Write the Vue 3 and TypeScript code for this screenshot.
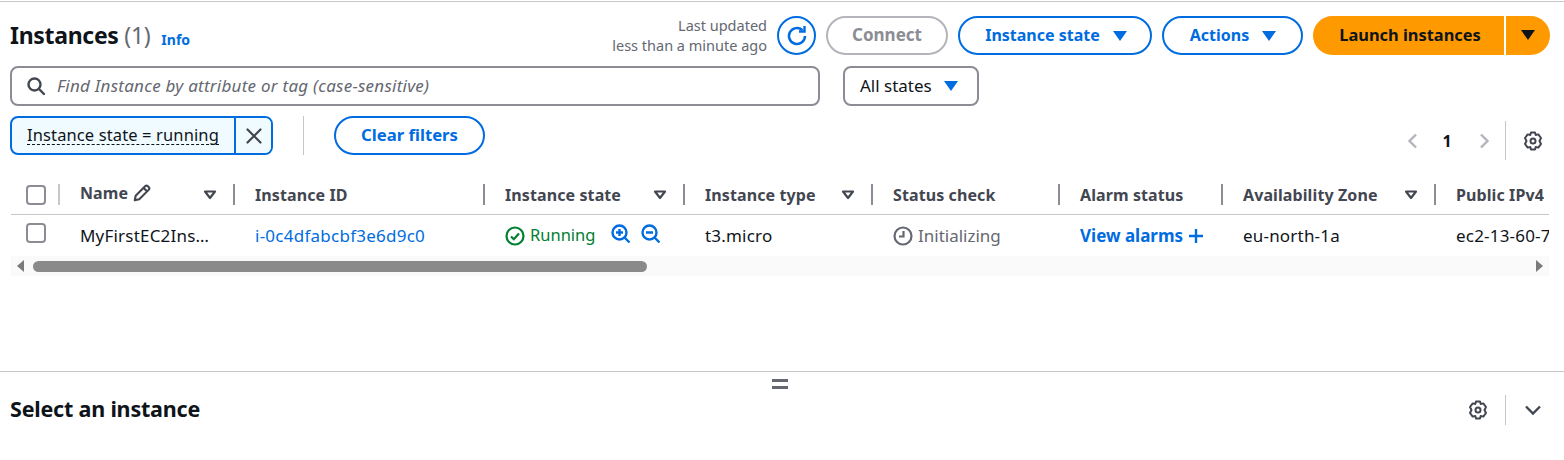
<script setup lang="ts">
interface Column {
  label: string
  width: number
  filter: boolean
}

const columns: Column[] = [
  { label: 'Instance ID', width: 250, filter: false },
  { label: 'Instance state', width: 200, filter: true },
  { label: 'Instance type', width: 188, filter: true },
  { label: 'Status check', width: 187, filter: false },
  { label: 'Alarm status', width: 163, filter: false },
  { label: 'Availability Zone', width: 213, filter: true },
  { label: 'Public IPv4', width: 115, filter: false },
]

const gearPath =
  'M8 1.500h4l.7 2.500 2.600-.6 2.700 3.600L16.500 10l1.500 3-2.700 3.600-2.600-.6-.7 2.500H8L7.300 16l-2.600.6L2 13l1.500-3L2 7l2.700-3.600 2.600.6z'
</script>

<template>
  <div class="page">
    <section class="panel">
      <header class="head">
        <div class="title">
          <h1>Instances <span class="count">(1)</span></h1>
          <a class="info">Info</a>
        </div>
        <div class="actions">
          <div class="updated">Last updated<br />less than a minute ago</div>
          <button class="refresh" aria-label="Refresh">
            <svg width="24" height="24" viewBox="0 0 24 24" fill="none" stroke="#006ce0" stroke-width="2.500">
              <path d="M20 12a8 8 0 1 1-2.600-5.900" />
              <path d="M19.500 2v5.500H14" stroke-width="2.400" />
            </svg>
          </button>
          <button class="btn disabled connect">Connect</button>
          <button class="btn state">Instance state <i class="caret"></i></button>
          <button class="btn act">Actions <i class="caret"></i></button>
          <div class="launch">
            <button class="launch-main">Launch instances</button>
            <button class="launch-drop" aria-label="More"><i class="caret dark"></i></button>
          </div>
        </div>
      </header>

      <div class="search-row">
        <div class="search">
          <svg width="20" height="20" viewBox="0 0 20 20" fill="none" stroke="#424650" stroke-width="2.400">
            <circle cx="8.500" cy="8.500" r="6" />
            <path d="M13 13l5 5" stroke-linecap="round" />
          </svg>
          <span class="placeholder">Find Instance by attribute or tag (case-sensitive)</span>
        </div>
        <div class="states">All states <i class="caret"></i></div>
      </div>

      <div class="filter-row">
        <div class="chip">
          <span class="chip-text"><span>Instance state = running</span></span>
          <button class="chip-x" aria-label="Remove">
            <svg width="18" height="18" viewBox="0 0 18 18" stroke="#424650" stroke-width="2.200" stroke-linecap="round">
              <path d="M2.500 2.500l13 13M15.500 2.500l-13 13" />
            </svg>
          </button>
        </div>
        <div class="vline"></div>
        <button class="btn clear">Clear filters</button>
        <div class="pager">
          <svg width="16" height="16" viewBox="0 0 16 16" fill="none" stroke="#b4b4bb" stroke-width="2.400">
            <path d="M11 1.500L4.500 8l6.500 6.500" />
          </svg>
          <b>1</b>
          <svg class="next" width="16" height="16" viewBox="0 0 16 16" fill="none" stroke="#b4b4bb" stroke-width="2.400">
            <path d="M5 1.500L11.500 8 5 14.500" />
          </svg>
          <div class="vline short"></div>
          <svg class="gear" width="20" height="20" viewBox="0 0 20 20" fill="none" stroke="#424650" stroke-width="2">
            <circle cx="10" cy="10" r="2.500" />
            <path :d="gearPath" stroke-linejoin="round" />
          </svg>
        </div>
      </div>

      <div class="table">
        <div class="thead">
          <div class="cell-check">
            <span class="box"></span>
            <span class="sep light"></span>
          </div>
          <div class="th name-col">
            <span class="name-label">Name
              <svg width="20" height="20" viewBox="0 0 18 18" fill="none" stroke="#424650" stroke-width="1.900" stroke-linejoin="round">
                <path d="M2.500 15.500l.8-4L11.800 3a1.800 1.800 0 0 1 2.500 0l.7.700a1.800 1.800 0 0 1 0 2.500L6.500 14.700z" />
                <path d="M10.500 4.500l3 3" />
              </svg>
            </span>
            <svg class="tri" width="14" height="10" viewBox="0 0 14 10" fill="none" stroke="#424650" stroke-width="2.200">
              <path d="M2 1.500h10L7 8z" stroke-linejoin="round" />
            </svg>
            <span class="sep"></span>
          </div>
          <div v-for="(col, i) in columns" :key="col.label" class="th" :style="{ width: col.width + 'px' }">
            <span>{{ col.label }}</span>
            <svg v-if="col.filter" class="tri" width="14" height="10" viewBox="0 0 14 10" fill="none" stroke="#424650" stroke-width="2.200">
              <path d="M2 1.500h10L7 8z" stroke-linejoin="round" />
            </svg>
            <span v-if="i < columns.length - 1" class="sep"></span>
          </div>
        </div>

        <div class="tbody">
          <div class="cell-check body-check">
            <span class="box"></span>
          </div>
          <div class="td name-col">MyFirstEC2Ins…</div>
          <div class="td" :style="{ width: columns[0].width + 'px' }"><a class="link">i-0c4dfabcbf3e6d9c0</a></div>
          <div class="td" :style="{ width: columns[1].width + 'px' }">
            <svg width="20" height="20" viewBox="0 0 20 20" fill="none" stroke="#00802f" stroke-width="2.200">
              <circle cx="10" cy="10" r="8.500" />
              <path d="M6 10.500l2.800 2.700L14 7.500" />
            </svg>
            <span class="running">Running</span>
            <svg class="zoom-a" width="20" height="20" viewBox="0 0 20 20" fill="none" stroke="#006ce0" stroke-width="2.400">
              <circle cx="8.500" cy="8.500" r="7" />
              <path d="M13.500 13.500l5 5M5 8.500h7M8.500 5v7" />
            </svg>
            <svg class="zoom-b" width="20" height="20" viewBox="0 0 20 20" fill="none" stroke="#006ce0" stroke-width="2.400">
              <circle cx="8.500" cy="8.500" r="7" />
              <path d="M13.500 13.500l5 5M5 8.500h7" />
            </svg>
          </div>
          <div class="td" :style="{ width: columns[2].width + 'px' }">t3.micro</div>
          <div class="td" :style="{ width: columns[3].width + 'px' }">
            <svg width="20" height="20" viewBox="0 0 20 20" fill="none" stroke="#656871" stroke-width="2.200">
              <circle cx="10" cy="10" r="8.500" />
              <path d="M10.500 5v5.500H6" />
            </svg>
            <span class="pending">Initializing</span>
          </div>
          <div class="td" :style="{ width: columns[4].width + 'px' }">
            <a class="link strong">View alarms</a>
            <svg class="plus" width="16" height="16" viewBox="0 0 16 16" stroke="#006ce0" stroke-width="2.400">
              <path d="M8 1v14M1 8h14" />
            </svg>
          </div>
          <div class="td" :style="{ width: columns[5].width + 'px' }">eu-north-1a</div>
          <div class="td clip" :style="{ width: columns[6].width + 'px' }">ec2-13-60-7</div>
        </div>

        <div class="scroll">
          <i class="arrow left"></i>
          <div class="track"><div class="thumb"></div></div>
          <i class="arrow right"></i>
        </div>
      </div>
    </section>

    <section class="split">
      <div class="handle"></div>
      <div class="split-row">
        <h2>Select an instance</h2>
        <div class="split-tools">
          <svg width="20" height="20" viewBox="0 0 20 20" fill="none" stroke="#424650" stroke-width="2">
            <circle cx="10" cy="10" r="2.500" />
            <path :d="gearPath" stroke-linejoin="round" />
          </svg>
          <div class="vline short"></div>
          <svg class="collapse" width="18" height="18" viewBox="0 0 18 18" fill="none" stroke="#424650" stroke-width="2.400">
            <path d="M2 5.500l7 7 7-7" />
          </svg>
        </div>
      </div>
    </section>
  </div>
</template>

<style>
html,
body {
  margin: 0;
  background: #fff;
}
</style>

<style scoped>
.page {
  width: 1564px;
  height: 460px;
  box-sizing: border-box;
  overflow: hidden;
  padding-top: 1px;
  font-family: "Noto Sans", "Open Sans", sans-serif;
  font-size: 16px;
  color: #0f141a;
  display: flex;
  flex-direction: column;
}

button {
  font-family: inherit;
  padding: 0;
  cursor: pointer;
}

.panel {
  height: 370px;
  box-sizing: border-box;
  border-top: 1px solid #c6c6cd;
  padding: 14px 14px 0 10px;
}

.head {
  display: flex;
  justify-content: space-between;
  align-items: center;
  height: 39px;
}

.title {
  display: flex;
  align-items: center;
  gap: 11px;
}

h1 {
  margin: -2px 0 0;
  font-size: 23px;
  line-height: 32px;
  font-weight: 700;
  letter-spacing: -0.3px;
}

.count {
  font-weight: 400;
  color: #656871;
}

.info {
  font-size: 14px;
  font-weight: 700;
  color: #006ce0;
  margin-top: 7px;
}

.actions {
  display: flex;
  align-items: center;
}

.updated {
  font-size: 14.5px;
  line-height: 20px;
  color: #656871;
  text-align: right;
  margin-right: 10px;
  margin-top: -1px;
}

.refresh {
  width: 39px;
  height: 39px;
  border: 2px solid #006ce0;
  border-radius: 50%;
  background: #fff;
  display: flex;
  align-items: center;
  justify-content: center;
  margin-right: 10px;
}

.btn {
  height: 39px;
  box-sizing: border-box;
  border: 2px solid #006ce0;
  border-radius: 20px;
  background: #fff;
  color: #006ce0;
  font-size: 16px;
  font-weight: 700;
  padding-bottom: 2px;
  display: inline-flex;
  align-items: center;
  justify-content: center;
  gap: 13px;
}

.btn .caret {
  margin-top: 2px;
}

.btn.disabled {
  border-color: #b4b4bb;
  color: #8c8c94;
}

.connect {
  width: 122px;
  margin-right: 10px;
  font-size: 17px;
}

.state {
  width: 194px;
  margin-right: 10px;
  padding-left: 2px;
}

.act {
  width: 141px;
  margin-right: 10px;
  padding-left: 1px;
}

.caret {
  display: inline-block;
  width: 0;
  height: 0;
  border-left: 7px solid transparent;
  border-right: 7px solid transparent;
  border-top: 10px solid #006ce0;
}

.caret.dark {
  border-top-color: #0f141a;
}

.launch {
  display: flex;
  width: 237px;
  height: 39px;
  gap: 2px;
}

.launch-main,
.launch-drop {
  border: none;
  background: #ff9900;
  color: #0f141a;
  font-size: 16.4px;
  font-weight: 700;
  padding-bottom: 2px;
}

.launch-main {
  width: 191px;
  padding-left: 3px;
  border-radius: 20px 0 0 20px;
}

.launch-drop {
  flex: 1;
  border-radius: 0 20px 20px 0;
  display: flex;
  align-items: center;
  justify-content: center;
}

.search-row {
  display: flex;
  gap: 23px;
  margin-top: 11px;
  height: 40px;
}

.search {
  width: 810px;
  box-sizing: border-box;
  border: 2px solid #8c8c94;
  border-radius: 8px;
  display: flex;
  align-items: center;
  gap: 11px;
  padding-left: 14px;
  font-size: 17px;
  letter-spacing: 0.25px;
  font-style: italic;
  color: #656871;
}

.placeholder {
  margin-top: -2px;
}

.states {
  width: 136px;
  box-sizing: border-box;
  border: 2px solid #8c8c94;
  border-radius: 8px;
  display: flex;
  align-items: center;
  gap: 12px;
  padding: 0 0 2px 15px;
  font-size: 17px;
}

.states .caret {
  margin-top: 2px;
}

.filter-row {
  display: flex;
  align-items: stretch;
  margin-top: 10px;
  height: 39px;
}

.chip {
  width: 263px;
  box-sizing: border-box;
  border: 2px solid #006ce0;
  border-radius: 8px;
  display: flex;
  background: #f0fbff;
  overflow: hidden;
}

.chip-text {
  width: 224px;
  box-sizing: border-box;
  padding-left: 15px;
  display: flex;
  align-items: center;
  border-right: 2px solid #006ce0;
  font-size: 16.5px;
  letter-spacing: 0.12px;
}

.chip-text span {
  border-bottom: 1px dashed #0f141a;
  line-height: 18px;
}

.chip-x {
  flex: 1;
  border: none;
  background: #f0fbff;
  display: flex;
  align-items: center;
  justify-content: center;
}

.vline {
  width: 1px;
  background: #c6c6cd;
  margin: 0 30px;
}

.vline.short {
  height: 39px;
  margin: 0;
}

.clear {
  width: 151px;
  font-size: 16.7px;
}

.pager {
  margin-left: auto;
  margin-top: 5px;
  display: flex;
  align-items: center;
  height: 39px;
}

.pager b {
  font-size: 16px;
  width: 52px;
  text-align: center;
}

.pager .next {
  margin-left: 3px;
}

.pager .vline {
  margin: 0 17px 0 13px;
}

.pager .gear {
  margin-right: 7px;
}

.table {
  margin-top: 20px;
  margin-left: 1px;
  width: 1538px;
  overflow: hidden;
}

.thead {
  display: flex;
  height: 39px;
  border-bottom: 1px solid #c6c6cd;
  font-weight: 700;
  color: #424650;
}

.tbody {
  display: flex;
  height: 41px;
  font-size: 17px;
  letter-spacing: 0.2px;
}

.cell-check {
  position: relative;
  width: 69px;
  flex: none;
  box-sizing: border-box;
  padding-left: 15px;
  display: flex;
  align-items: center;
}

.body-check {
  padding-bottom: 5px;
}

.box {
  width: 20px;
  height: 20px;
  box-sizing: border-box;
  border: 2px solid #8c8c94;
  border-radius: 4px;
}

.th,
.td {
  position: relative;
  flex: none;
  box-sizing: border-box;
  display: flex;
  align-items: center;
  white-space: nowrap;
}

.th {
  letter-spacing: 0.1px;
}

.name-col {
  width: 175px;
}

.name-label {
  display: inline-flex;
  align-items: center;
  gap: 4px;
  margin-top: -3px;
}

.sep {
  position: absolute;
  top: 9px;
  bottom: 9px;
  right: 20px;
  width: 2px;
  background: #8c8c94;
}

.sep.light {
  right: 20px;
  background: #c6c6cd;
}

.tri {
  position: absolute;
  right: 38px;
  top: 15px;
}

.link {
  color: #006ce0;
  letter-spacing: 0.25px;
}

.link.strong {
  font-weight: 700;
  letter-spacing: 0;
}

.running {
  color: #00802f;
  font-size: 16.5px;
  letter-spacing: 0;
  margin-left: 5px;
  margin-top: -2px;
}

.zoom-a {
  margin-left: 16px;
  margin-top: -4px;
}

.zoom-b {
  margin-left: 10px;
  margin-top: -4px;
}

.pending {
  color: #656871;
  letter-spacing: 0;
  margin-left: 5px;
}

.plus {
  margin-left: 5px;
}

.clip {
  overflow: hidden;
}

.scroll {
  height: 20px;
  background: #fafafa;
  display: flex;
  align-items: center;
  padding: 0 6px;
}

.track {
  flex: 1;
  margin: 0 8px 0 9px;
}

.thumb {
  width: 614px;
  height: 11px;
  background: #8a8a8a;
  border-radius: 6px;
}

.arrow {
  width: 0;
  height: 0;
  border-top: 6px solid transparent;
  border-bottom: 6px solid transparent;
}

.arrow.left {
  border-right: 7px solid #7a7a7a;
}

.arrow.right {
  border-left: 7px solid #7a7a7a;
}

.split {
  position: relative;
  flex: 1;
  border-top: 1px solid #c6c6cd;
  padding: 0 22px 0 10px;
}

.handle {
  position: absolute;
  left: 772px;
  top: 7px;
  width: 16px;
  height: 4px;
  border-top: 3px solid #656871;
  border-bottom: 3px solid #656871;
}

.split-row {
  display: flex;
  justify-content: space-between;
  align-items: center;
  height: 39px;
  margin-top: 17px;
}

h2 {
  margin: 0;
  font-size: 21.5px;
  font-weight: 700;
  letter-spacing: -0.2px;
}

.split-tools {
  display: flex;
  align-items: center;
  gap: 17px;
  margin-top: 2px;
}

.split-tools .vline.short {
  height: 30px;
}

.split-tools .collapse {
  margin-left: 1px;
}
</style>
